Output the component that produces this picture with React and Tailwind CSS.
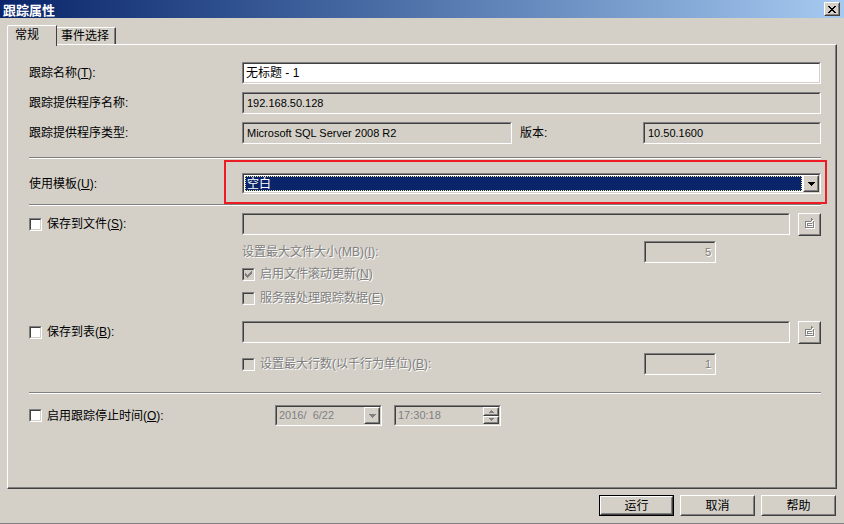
import React from "react";

const DIS = "text-[#808080] [text-shadow:1px_1px_0_#ffffff]";

function Sunken({ className = "", innerClass = "bg-[#d4d0c8]", children }) {
  return (
    <div className={`shrink-0 border border-t-[#808080] border-l-[#808080] border-r-white border-b-white ${className}`}>
      <div className={`w-full h-full border border-t-[#404040] border-l-[#404040] border-r-[#d4d0c8] border-b-[#d4d0c8] flex items-center ${innerClass}`}>
        {children}
      </div>
    </div>
  );
}

function Raised({ className = "", children, def = false }) {
  const core = (
    <div className={`shrink-0 border border-t-white border-l-white border-r-[#404040] border-b-[#404040] bg-[#d4d0c8] ${def ? "w-full h-full" : className}`}>
      <div className="w-full h-full border border-t-[#d4d0c8] border-l-[#d4d0c8] border-r-[#808080] border-b-[#808080] flex items-center justify-center">
        {children}
      </div>
    </div>
  );
  if (def) return <div className={`shrink-0 border border-black ${className}`}>{core}</div>;
  return core;
}

function Check({ checked = false, disabled = false }) {
  return (
    <div className="w-[13px] h-[13px] shrink-0 border border-t-[#808080] border-l-[#808080] border-r-white border-b-white">
      <div className={`w-full h-full border border-t-[#404040] border-l-[#404040] border-r-[#d4d0c8] border-b-[#d4d0c8] flex items-center justify-center ${disabled ? "bg-[#d4d0c8]" : "bg-white"}`}>
        {checked && (
          <svg width="7" height="7" viewBox="0 0 7 7" shapeRendering="crispEdges">
            <polygon points="0,2 2,4 6,0 7,0 7,3 2,7 0,5" fill={disabled ? "#808080" : "#000000"} />
          </svg>
        )}
      </div>
    </div>
  );
}

function DownArrow({ color = "#000000" }) {
  return (
    <svg width="7" height="4" viewBox="0 0 7 4" shapeRendering="crispEdges">
      <path d="M0 0h7v1h-1v1h-1v1h-1v1h-1v-1h-1v-1h-1v-1h-1z" fill={color} />
    </svg>
  );
}

function BrowseIcon() {
  const d = "M6 0h1v1h1v1h-1v1h-1z M0 3h6v1h-6z M0 3h1v7h-1z M8 3h1v7h-1z M0 9h9v1h-9z M2 5h5v1h-5z M2 5h1v3h-1z M2 7h5v1h-5z";
  return (
    <svg width="11" height="12" viewBox="0 0 11 12" shapeRendering="crispEdges" className="ml-[1px]">
      <path d={d} fill="#ffffff" transform="translate(1,1)" />
      <path d={d} fill="#808080" />
    </svg>
  );
}

function Separator({ className = "" }) {
  return <div className={`h-[2px] border-t border-t-[#808080] border-b border-b-white ${className}`} />;
}

export default function App() {
  return (
    <div className="w-[844px] h-[524px] bg-[#d4d0c8] flex flex-col overflow-hidden font-['Liberation_Sans','Noto_Sans_CJK_SC',sans-serif] text-[12px] text-black leading-none">
      {/* Title bar */}
      <div className="h-[18px] shrink-0 flex items-center justify-between bg-linear-to-r from-[#0a246a] to-[#a6caf0] pl-[3px] pr-[4px]">
        <span className="text-white font-bold text-[13px] font-['Noto_Sans_CJK_SC',sans-serif]">跟踪属性</span>
        <Raised className="w-[16px] h-[14px]">
          <svg width="8" height="7" viewBox="0 0 8 7" shapeRendering="crispEdges">
            <path d="M0 0h2v1h1v1h2v-1h1v-1h2v1h-1v1h-1v1h-1v1h1v1h1v1h1v1h-2v-1h-1v-1h-2v1h-1v1h-2v-1h1v-1h1v-1h1v-1h-1v-1h-1v-1h-1z" fill="#000000" />
          </svg>
        </Raised>
      </div>

      {/* Tabs */}
      <div className="flex items-end h-[19px] mt-[7px] pl-[7px] shrink-0">
        <div className="relative z-10 -mb-[2px] h-[21px] w-[50px] bg-[#d4d0c8] border-t border-l border-t-white border-l-white border-r border-r-[#404040] rounded-tl-[2px] pl-[7px] pt-[3px]">
          常规
        </div>
        <div className="h-[17px] w-[59px] border-t border-t-white border-r border-r-[#404040] shadow-[inset_-1px_0_0_#808080] pl-[4px] pt-[2px]">
          事件选择
        </div>
      </div>

      {/* Panel */}
      <div className="ml-[7px] w-[830px] h-[445px] shrink-0 border-t border-l border-t-white border-l-white border-r border-b border-r-[#404040] border-b-[#404040] shadow-[inset_-1px_-1px_0_#808080]">
        <div className="flex flex-col w-[792px] ml-[21px] pt-[17px]">
          {/* Row 1 */}
          <div className="flex items-center h-[22px]">
            <div className="w-[213px] shrink-0">跟踪名称(<span className="underline">T</span>):</div>
            <Sunken className="flex-1 h-[22px]" innerClass="bg-white">
              <span className="pl-[2px] text-[12px]">无标题 - 1</span>
            </Sunken>
          </div>
          {/* Row 2 */}
          <div className="flex items-center h-[22px] mt-[8px]">
            <div className="w-[213px] shrink-0">跟踪提供程序名称:</div>
            <Sunken className="flex-1 h-[22px]">
              <span className="pl-[3px] text-[11px]">192.168.50.128</span>
            </Sunken>
          </div>
          {/* Row 3 */}
          <div className="flex items-center h-[22px] mt-[8px]">
            <div className="w-[213px] shrink-0">跟踪提供程序类型:</div>
            <Sunken className="w-[270px] h-[22px]">
              <span className="pl-[3px] text-[11px]">Microsoft SQL Server 2008 R2</span>
            </Sunken>
            <div className="ml-[8px] w-[123px] shrink-0">版本:</div>
            <Sunken className="flex-1 h-[22px]">
              <span className="pl-[3px] text-[11px]">10.50.1600</span>
            </Sunken>
          </div>

          <Separator className="mt-[13px]" />

          {/* Template row */}
          <div className="relative flex items-center pt-[14px] pb-[10px]">
            <div className="w-[213px] shrink-0">使用模板(<span className="underline">U</span>):</div>
            <Sunken className="flex-1 h-[21px]" innerClass="bg-white">
              <div className="flex-1 h-full p-[1px]">
                <div className="w-full h-full bg-[#0a246a] border border-dotted border-[#f0e8a0] flex items-center pl-[1px]">
                  <span className="text-white">空白</span>
                </div>
              </div>
              <Raised className="w-[16px] h-full">
                <DownArrow />
              </Raised>
            </Sunken>
            <div className="absolute left-[195px] top-[1px] w-[603px] h-[44px] border-2 border-[#ed1c24] pointer-events-none" />
          </div>

          <Separator />

          {/* Save to file */}
          <div className="flex items-center h-[22px] mt-[7px]">
            <div className="w-[213px] shrink-0 flex items-center gap-[5px]">
              <Check />
              <span>保存到文件(<span className="underline">S</span>):</span>
            </div>
            <Sunken className="flex-1 h-[22px]" />
            <Raised className="ml-[8px] w-[23px] h-[23px]">
              <BrowseIcon />
            </Raised>
          </div>
          {/* Max file size */}
          <div className="flex items-center h-[22px] mt-[6px]">
            <div className="w-[213px] shrink-0" />
            <div className={`w-[402px] shrink-0 ${DIS}`}>设置最大文件大小(MB)(<span className="underline">I</span>):</div>
            <Sunken className="w-[72px] h-[22px]" innerClass="bg-[#d4d0c8] justify-end">
              <span className={`pr-[3px] text-[11px] ${DIS}`}>5</span>
            </Sunken>
          </div>
          {/* Rollover */}
          <div className="flex items-center h-[16px] mt-[3px]">
            <div className="w-[213px] shrink-0" />
            <div className="flex items-center gap-[5px]">
              <Check checked disabled />
              <span className={DIS}>启用文件滚动更新(<span className="underline">N</span>)</span>
            </div>
          </div>
          {/* Server processes */}
          <div className="flex items-center h-[16px] mt-[8px]">
            <div className="w-[213px] shrink-0" />
            <div className="flex items-center gap-[5px]">
              <Check disabled />
              <span className={DIS}>服务器处理跟踪数据(<span className="underline">E</span>)</span>
            </div>
          </div>

          {/* Save to table */}
          <div className="flex items-center h-[22px] mt-[15px]">
            <div className="w-[213px] shrink-0 flex items-center gap-[5px]">
              <Check />
              <span>保存到表(<span className="underline">B</span>):</span>
            </div>
            <Sunken className="flex-1 h-[22px]" />
            <Raised className="ml-[8px] w-[23px] h-[23px]">
              <BrowseIcon />
            </Raised>
          </div>
          {/* Max rows */}
          <div className="flex items-center h-[22px] mt-[10px]">
            <div className="w-[213px] shrink-0" />
            <div className="w-[402px] shrink-0 flex items-center gap-[5px]">
              <Check disabled />
              <span className={DIS}>设置最大行数(以千行为单位)(<span className="underline">B</span>):</span>
            </div>
            <Sunken className="w-[72px] h-[22px]" innerClass="bg-[#d4d0c8] justify-end">
              <span className={`pr-[3px] text-[11px] ${DIS}`}>1</span>
            </Sunken>
          </div>

          <Separator className="mt-[17px]" />

          {/* Stop time */}
          <div className="flex items-center h-[21px] mt-[11px]">
            <div className="w-[246px] shrink-0 flex items-center gap-[5px]">
              <Check />
              <span>启用跟踪停止时间(<span className="underline">O</span>):</span>
            </div>
            <Sunken className="w-[107px] h-[21px]" innerClass="bg-[#d4d0c8] justify-between">
              <span className="pl-[2px] text-[11px] text-[#808080] whitespace-pre">2016/  6/22</span>
              <Raised className="w-[16px] h-full">
                <DownArrow color="#808080" />
              </Raised>
            </Sunken>
            <Sunken className="ml-[12px] w-[107px] h-[21px]" innerClass="bg-[#d4d0c8] justify-between">
              <span className="pl-[2px] text-[11px] text-[#808080]">17:30:18</span>
              <div className="w-[16px] h-full flex flex-col">
                <Raised className="w-full flex-1">
                  <svg width="5" height="3" viewBox="0 0 5 3" shapeRendering="crispEdges">
                    <path d="M2 0h1v1h1v1h1v1h-5v-1h1v-1h1z" fill="#808080" />
                  </svg>
                </Raised>
                <Raised className="w-full flex-1">
                  <svg width="5" height="3" viewBox="0 0 5 3" shapeRendering="crispEdges">
                    <path d="M0 0h5v1h-1v1h-1v1h-1v-1h-1v-1h-1z" fill="#808080" />
                  </svg>
                </Raised>
              </div>
            </Sunken>
          </div>
        </div>
      </div>

      {/* Buttons */}
      <div className="flex justify-end gap-[6px] pr-[8px] mt-[6px] shrink-0">
        <Raised def className="w-[75px] h-[21px]">运行</Raised>
        <Raised className="w-[75px] h-[21px]">取消</Raised>
        <Raised className="w-[75px] h-[21px]">帮助</Raised>
      </div>

      <div className="mt-auto h-[1px] bg-[#808080] shrink-0" />
    </div>
  );
}
